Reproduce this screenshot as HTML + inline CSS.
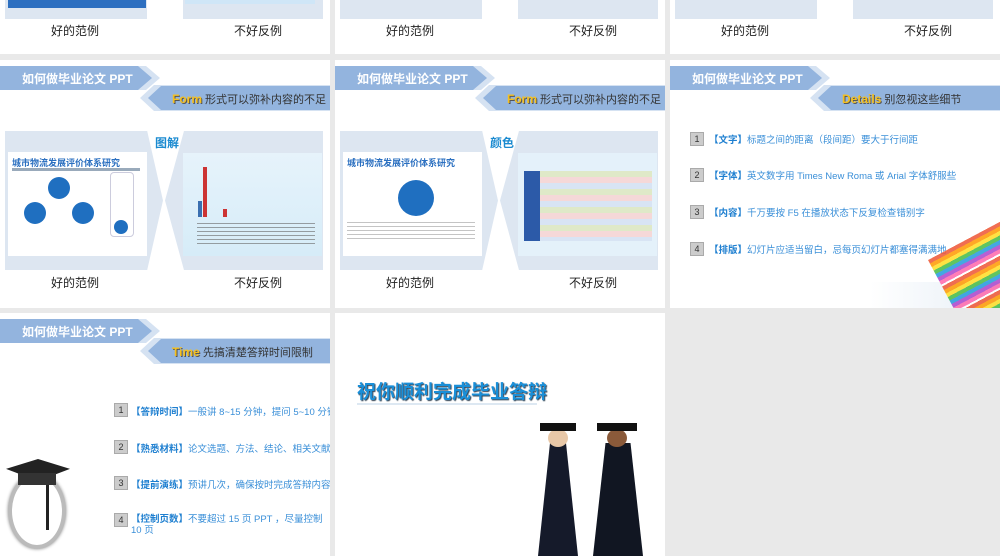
<!DOCTYPE html>
<html><head><meta charset="utf-8"><style>
*{margin:0;padding:0;box-sizing:border-box}
body{width:1000px;height:556px;background:#e9e9e9;position:relative;overflow:hidden;font-family:"Liberation Sans","Noto Sans CJK SC",sans-serif}
.p{position:absolute;background:#fff;overflow:hidden}
.a{position:absolute}
.cap{position:absolute;font-size:12px;color:#222;width:120px;text-align:center}
.b1{position:absolute;left:0;top:6px;width:152px;height:24px;background:#93b4de;clip-path:polygon(0 0,138px 0,152px 12px,138px 24px,0 24px)}
.b1s{position:absolute;left:0;top:6px;width:160px;height:24px;background:#d5e2f2;clip-path:polygon(0 0,146px 0,160px 12px,146px 24px,0 24px)}
.b1>span{position:absolute;left:22px;top:4px;color:#fff;font-weight:bold;font-size:12px}
.b2s{position:absolute;left:140px;top:25px;width:190px;height:26px;background:#d5e2f2;clip-path:polygon(14px 0,100% 0,100% 100%,14px 100%,0 50%)}
.b2{position:absolute;left:148px;top:26px;width:182px;height:24px;background:#93b4de;clip-path:polygon(13px 0,100% 0,100% 100%,13px 100%,0 50%)}
.b2>span{position:absolute;left:24px;top:5px;font-size:11px;color:#333;white-space:nowrap}
.y{color:#f4c020;font-weight:bold;font-size:12px;text-shadow:1px 1px 0 #555}
.fl{position:absolute;background:#dde6f1;clip-path:polygon(0 0,90% 0,100% 50%,90% 100%,0 100%)}
.fr{position:absolute;background:#dde6f1;clip-path:polygon(12% 0,100% 0,100% 100%,12% 100%,0 50%)}
.num{position:absolute;width:14px;height:14px;background:#ccc;border:1px solid #aaa;font-size:9px;color:#333;text-align:center;line-height:12px}
.it{position:absolute;font-size:9.5px;color:#3a8fd8;white-space:nowrap}
.it b{color:#1e7fd0}
</style></head><body>

<div class="p" style="left:0;top:0;width:330px;height:54px">
 <div class="a" style="left:5px;top:0;width:142px;height:19px;background:#dde6f1"></div>
 <div class="a" style="left:8px;top:0;width:138px;height:8px;background:#2d6fc0"></div>
 <div class="a" style="left:183px;top:0;width:140px;height:19px;background:#dde6f1"></div>
 <div class="a" style="left:185px;top:0;width:130px;height:4px;background:#cfe6f7"></div>
 <div class="cap" style="left:15px;top:22px">好的范例</div>
 <div class="cap" style="left:198px;top:22px">不好反例</div>
</div>
<div class="p" style="left:335px;top:0;width:330px;height:54px">
 <div class="a" style="left:5px;top:0;width:142px;height:19px;background:#dde6f1"></div>
 <div class="a" style="left:183px;top:0;width:140px;height:19px;background:#dde6f1"></div>
 <div class="cap" style="left:15px;top:22px">好的范例</div>
 <div class="cap" style="left:198px;top:22px">不好反例</div>
</div>
<div class="p" style="left:670px;top:0;width:330px;height:54px">
 <div class="a" style="left:5px;top:0;width:142px;height:19px;background:#dde6f1"></div>
 <div class="a" style="left:183px;top:0;width:140px;height:19px;background:#dde6f1"></div>
 <div class="cap" style="left:15px;top:22px">好的范例</div>
 <div class="cap" style="left:198px;top:22px">不好反例</div>
</div>

<div class="p" style="left:0;top:60px;width:330px;height:248px">
 <div class="b1s"></div><div class="b1"><span>如何做毕业论文 PPT</span></div>
 <div class="b2s"></div><div class="b2"><span><span class="y">Form</span> 形式可以弥补内容的不足</span></div>
 <div class="fl" style="left:5px;top:71px;width:158px;height:139px"></div>
 <div class="fr" style="left:165px;top:71px;width:158px;height:139px"></div>
 <div class="a" style="left:155px;top:74px;font-size:12px;font-weight:bold;color:#1a8ad0">图解</div>
 <div class="a" style="left:8px;top:92px;width:139px;height:104px;background:#fff">
  <div class="a" style="left:4px;top:4px;font-size:9px;font-weight:bold;color:#2a6fc0">城市物流发展评价体系研究</div>
  <div class="a" style="left:4px;top:16px;width:128px;height:3px;background:#9ab"></div>
  <div class="a" style="left:40px;top:25px;width:22px;height:22px;border-radius:50%;background:#1f6fc0"></div>
  <div class="a" style="left:16px;top:50px;width:22px;height:22px;border-radius:50%;background:#1f6fc0"></div>
  <div class="a" style="left:64px;top:50px;width:22px;height:22px;border-radius:50%;background:#1f6fc0"></div>
  <div class="a" style="left:102px;top:20px;width:24px;height:65px;border:1px solid #ccd;border-radius:4px"></div>
  <div class="a" style="left:106px;top:68px;width:14px;height:14px;border-radius:50%;background:#1f6fc0"></div>
 </div>
 <div class="a" style="left:183px;top:93px;width:139px;height:103px;background:linear-gradient(#e6f3fb,#d6ecf8)">
  <div class="a" style="left:20px;top:14px;width:4px;height:50px;background:#c33"></div>
  <div class="a" style="left:15px;top:48px;width:4px;height:16px;background:#3a6fb0"></div>
  <div class="a" style="left:40px;top:56px;width:4px;height:8px;background:#c33"></div>
  <div class="a" style="left:14px;top:70px;width:118px;height:22px;background:repeating-linear-gradient(#666 0 1px,transparent 1px 4px);opacity:.6"></div>
 </div>
 <div class="cap" style="left:15px;top:214px">好的范例</div>
 <div class="cap" style="left:198px;top:214px">不好反例</div>
</div>

<div class="p" style="left:335px;top:60px;width:330px;height:248px">
 <div class="b1s"></div><div class="b1"><span>如何做毕业论文 PPT</span></div>
 <div class="b2s"></div><div class="b2"><span><span class="y">Form</span> 形式可以弥补内容的不足</span></div>
 <div class="fl" style="left:5px;top:71px;width:158px;height:139px"></div>
 <div class="fr" style="left:165px;top:71px;width:158px;height:139px"></div>
 <div class="a" style="left:155px;top:74px;font-size:12px;font-weight:bold;color:#1a8ad0">颜色</div>
 <div class="a" style="left:8px;top:92px;width:139px;height:104px;background:#fff">
  <div class="a" style="left:4px;top:4px;font-size:9px;font-weight:bold;color:#2a6fc0">城市物流发展评价体系研究</div>
  <div class="a" style="left:55px;top:28px;width:36px;height:36px;border-radius:50%;background:#1f6fc0"></div>
  <div class="a" style="left:4px;top:70px;width:128px;height:20px;background:repeating-linear-gradient(#888 0 1px,transparent 1px 4px);opacity:.5"></div>
 </div>
 <div class="a" style="left:183px;top:93px;width:139px;height:103px;background:#e4f1fa">
  <div class="a" style="left:6px;top:18px;width:128px;height:70px;background:repeating-linear-gradient(#dfe9c8 0 6px,#f5d8d8 6px 12px,#d8e4f4 12px 18px)"></div>
  <div class="a" style="left:6px;top:18px;width:16px;height:70px;background:#2c5aa8"></div>
 </div>
 <div class="cap" style="left:15px;top:214px">好的范例</div>
 <div class="cap" style="left:198px;top:214px">不好反例</div>
</div>

<div class="p" style="left:670px;top:60px;width:330px;height:248px">
 <div class="b1s"></div><div class="b1"><span>如何做毕业论文 PPT</span></div>
 <div class="b2s"></div><div class="b2"><span style="left:24px"><span class="y">Details</span> 别忽视这些细节</span></div>
 <div class="num" style="left:20px;top:72px">1</div><div class="it" style="left:39px;top:72px"><b>【文字】</b>标题之间的距离（段间距）要大于行间距</div>
 <div class="num" style="left:20px;top:108px">2</div><div class="it" style="left:39px;top:108px"><b>【字体】</b>英文数字用 Times New Roma 或 Arial 字体舒服些</div>
 <div class="num" style="left:20px;top:145px">3</div><div class="it" style="left:39px;top:145px"><b>【内容】</b>千万要按 F5 在播放状态下反复检查错别字</div>
 <div class="num" style="left:20px;top:182px">4</div><div class="it" style="left:39px;top:182px"><b>【排版】</b>幻灯片应适当留白，忌每页幻灯片都塞得满满地</div>
 <div class="a" style="left:200px;top:222px;width:130px;height:26px;background:linear-gradient(90deg,#fff,#e6eef6)"></div>
 <div class="a" style="left:258px;top:200px;width:90px;height:80px;transform:rotate(-28deg);transform-origin:0 0;background:repeating-linear-gradient(#e53 0 4px,#f90 4px 8px,#fd2 8px 12px,#4b4 12px 16px,#29d 16px 20px,#a4c 20px 24px,#f6a 24px 28px,#fff 28px 30px);opacity:.85"></div>
</div>

<div class="p" style="left:0;top:313px;width:330px;height:243px">
 <div class="b1s"></div><div class="b1"><span>如何做毕业论文 PPT</span></div>
 <div class="b2s"></div><div class="b2"><span><span class="y">Time</span> 先搞清楚答辩时间限制</span></div>
 <div class="num" style="left:114px;top:90px">1</div><div class="it" style="left:131px;top:91px"><b>【答辩时间】</b>一般讲 8~15 分钟，提问 5~10 分钟</div>
 <div class="num" style="left:114px;top:127px">2</div><div class="it" style="left:131px;top:128px"><b>【熟悉材料】</b>论文选题、方法、结论、相关文献</div>
 <div class="num" style="left:114px;top:163px">3</div><div class="it" style="left:131px;top:164px"><b>【提前演练】</b>预讲几次，确保按时完成答辩内容</div>
 <div class="num" style="left:114px;top:200px">4</div><div class="it" style="left:131px;top:201px;white-space:normal;width:200px;line-height:11px"><b>【控制页数】</b>不要超过 15 页 PPT ，尽量控制 10 页</div>
 <div class="a" style="left:8px;top:160px;width:58px;height:76px;border-radius:50%;background:#fff;border:4px solid #bbb;box-shadow:0 0 3px #888"></div>
 <div class="a" style="left:6px;top:146px;width:64px;height:22px;background:#222;clip-path:polygon(50% 0,100% 45%,50% 100%,0 45%)"></div>
 <div class="a" style="left:18px;top:160px;width:38px;height:12px;background:#333"></div>
 <div class="a" style="left:46px;top:172px;width:3px;height:45px;background:#222"></div>
</div>

<div class="p" style="left:335px;top:313px;width:330px;height:243px">
 <div class="a" style="left:22px;top:64px;font-size:19px;font-weight:bold;color:#1a8fd8;text-shadow:1px 1px 1px #345">祝你顺利完成毕业答辩</div>
 <div class="a" style="left:22px;top:90px;width:180px;height:2px;background:#dde8f2"></div>
 <div class="a" style="left:203px;top:130px;width:40px;height:113px;background:#151a2a;clip-path:polygon(30% 0,70% 0,100% 100%,0 100%)"></div>
 <div class="a" style="left:213px;top:116px;width:20px;height:18px;background:#e8c8a8;border-radius:50%"></div>
 <div class="a" style="left:258px;top:130px;width:50px;height:113px;background:#111622;clip-path:polygon(25% 0,75% 0,100% 100%,0 100%)"></div>
 <div class="a" style="left:272px;top:116px;width:20px;height:18px;background:#8a5a3a;border-radius:50%"></div>
 <div class="a" style="left:205px;top:110px;width:36px;height:8px;background:#111"></div>
 <div class="a" style="left:262px;top:110px;width:40px;height:8px;background:#111"></div>
</div>

</body></html>
